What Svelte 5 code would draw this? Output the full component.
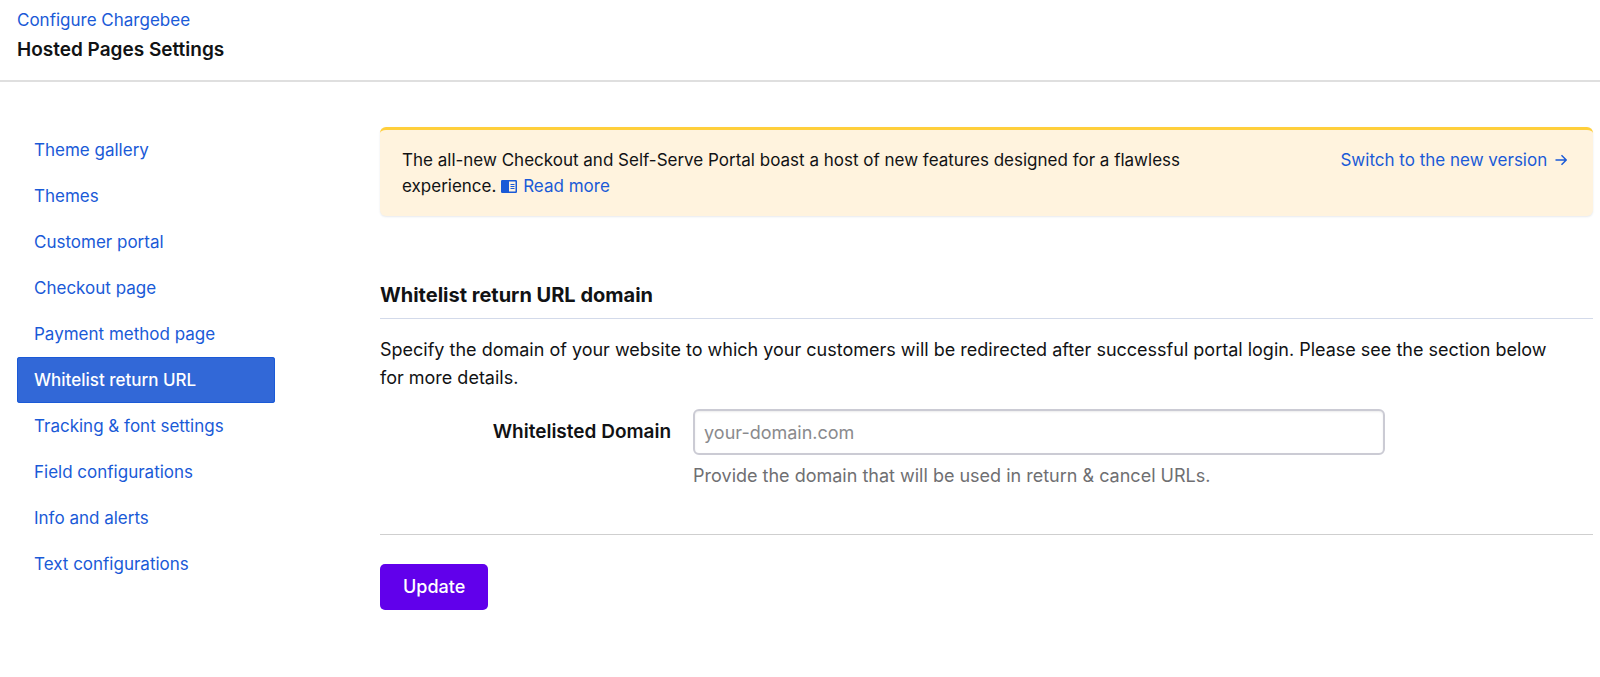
<script>
    const menu = [
        'Theme gallery',
        'Themes',
        'Customer portal',
        'Checkout page',
        'Payment method page',
        'Whitelist return URL',
        'Tracking & font settings',
        'Field configurations',
        'Info and alerts',
        'Text configurations'
    ];

    let active = $state('Whitelist return URL');
    let domain = $state('');

    function select(event, item) {
        event.preventDefault();
        active = item;
    }

    function handleSubmit(event) {
        event.preventDefault();
        domain = domain.trim();
    }
</script>

<div class="page">
    <header>
        <a href="#configure">Configure Chargebee</a>
        <h1>Hosted Pages Settings</h1>
    </header>

    <div class="layout">
        <nav aria-label="Hosted pages">
            {#each menu as item}
                <a
                    href="#settings"
                    class:active={active === item}
                    aria-current={active === item ? 'page' : undefined}
                    onclick={(e) => select(e, item)}
                >{item}</a>
            {/each}
        </nav>

        <main>
            <section class="banner">
                <p>
                    The all-new Checkout and Self-Serve Portal boast a host of new features designed for a flawless experience.
                    <a href="#docs"><svg class="book" viewBox="0 0 16 13" aria-hidden="true">
                        <rect x="0.75" y="0.75" width="14.5" height="11.5" rx="0.5" fill="none" stroke="currentColor" stroke-width="1.5" />
                        <path d="M1 1h7v11H1z" fill="currentColor" />
                        <path d="M9.5 4.5h4M9.5 6.5h4M9.5 8.5h4" stroke="currentColor" />
                    </svg>Read more</a>
                </p>
                <a class="switch" href="#switch">
                    Switch to the new version
                    <svg class="arrow" viewBox="0 0 12 12" aria-hidden="true">
                        <path d="M0.5 6h10.5M6.5 1.2L11.2 6L6.5 10.8" fill="none" stroke="currentColor" stroke-width="1.4" />
                    </svg>
                </a>
            </section>

            <h2>Whitelist return URL domain</h2>
            <p class="intro">
                Specify the domain of your website to which your customers will be redirected after successful portal login. Please see the section below for more details.
            </p>

            <form onsubmit={handleSubmit}>
                <div class="field">
                    <label for="domain">Whitelisted Domain</label>
                    <div class="control">
                        <input
                            type="text"
                            id="domain"
                            placeholder="your-domain.com"
                            aria-describedby="domain-help"
                            bind:value={domain}
                        />
                        <p id="domain-help" class="help">Provide the domain that will be used in return &amp; cancel URLs.</p>
                    </div>
                </div>

                <div class="actions">
                    <button type="submit">Update</button>
                </div>
            </form>
        </main>
    </div>
</div>

<style>
    :global(body) {
        background: #fff;
    }

    .page {
        font-family: Inter, 'Liberation Sans', sans-serif;
        font-size: 17px;
        line-height: 26px;
        color: #111214;
    }

    h1,
    h2,
    p {
        margin: 0;
    }

    a {
        color: #1a5ad7;
        text-decoration: none;
    }

    header {
        padding: 7px 17px 13px;
        border-bottom: 2px solid #dfdfdf;
    }

    header a {
        display: inline-block;
    }

    h1 {
        font-size: 19px;
        line-height: 34px;
        font-weight: 600;
    }

    .layout {
        display: grid;
        grid-template-columns: 258px minmax(0, 1fr);
        column-gap: 105px;
        padding: 45px 7px 60px 17px;
    }

    nav a {
        display: block;
        padding: 10px 17px;
        border-radius: 3px;
    }

    nav a.active {
        background: #3268d7;
        box-shadow: inset 0 0 0 1px #1a5ad7;
        color: #fff;
        font-weight: 500;
    }

    .banner {
        display: flex;
        justify-content: space-between;
        align-items: flex-start;
        padding: 17px 26px 17px 22px;
        border-top: 3px solid #ffcf3b;
        border-radius: 6px;
        background: #fff3de;
        box-shadow: 0 1px 2px rgba(60, 70, 110, 0.12);
    }

    .banner p {
        flex: 0 1 70%;
    }

    .book {
        width: 16px;
        height: 13px;
        margin-right: 6px;
        vertical-align: -1px;
    }

    .switch {
        white-space: nowrap;
    }

    .arrow {
        width: 12px;
        height: 12px;
        margin-left: 3px;
    }

    h2 {
        margin-top: 65px;
        padding-bottom: 9px;
        border-bottom: 1px solid #d3daea;
        font-size: 20px;
        line-height: 28px;
        font-weight: 700;
    }

    .intro {
        margin-top: 17px;
        padding-right: 22px;
        font-size: 18px;
        line-height: 28px;
    }

    form {
        font-size: 18px;
    }

    .field {
        display: grid;
        grid-template-columns: 24% 57%;
        column-gap: 22px;
        margin-top: 17px;
    }

    label {
        font-size: 19px;
        line-height: 46px;
        font-weight: 600;
        text-align: right;
    }

    input {
        box-sizing: border-box;
        width: 100%;
        height: 46px;
        padding: 0 9px;
        border: 2px solid #cbcbd4;
        border-radius: 6px;
        box-shadow: inset 0 1px 2px rgba(0, 0, 0, 0.08);
        background: #fff;
        font: inherit;
        color: inherit;
    }

    input::placeholder {
        color: #8a8a8d;
    }

    .help {
        margin-top: 8px;
        color: #6f6f72;
    }

    .actions {
        margin-top: 45px;
        padding-top: 29px;
        border-top: 1px solid #cfcfcf;
    }

    button {
        padding: 10px 23px;
        border: 0;
        border-radius: 5px;
        background: #6100eb;
        font: inherit;
        font-weight: 500;
        color: #fff;
        cursor: pointer;
    }
</style>
